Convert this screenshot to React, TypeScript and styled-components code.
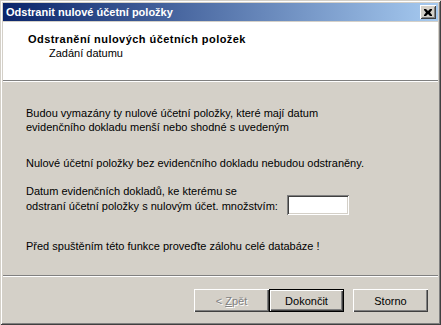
import React from "react";
import styled, { createGlobalStyle } from "styled-components";

const Global = createGlobalStyle`
  html, body { margin: 0; padding: 0; background: #d4d0c8; }
  body { font-family: Tahoma, "Liberation Sans", Arial, sans-serif; font-size: 11px; color: #000; }
`;

const Window = styled.div`
  width: 441px;
  height: 325px;
  box-sizing: border-box;
  background: #d4d0c8;
  padding: 3px;
  display: flex;
  flex-direction: column;
  box-shadow: inset 1px 1px 0 #d4d0c8, inset -1px -1px 0 #404040,
    inset 2px 2px 0 #ffffff, inset -2px -2px 0 #808080;
`;

const TitleBar = styled.div`
  height: 18px;
  flex: none;
  display: flex;
  align-items: center;
  justify-content: space-between;
  padding: 0 2px 0 3px;
  background: linear-gradient(to right, #0a246a, #a6caf0);
  color: #fff;
  font-weight: bold;
  font-size: 11px;
  font-family: Tahoma, "Liberation Sans", Arial, sans-serif;
`;

const CloseButton = styled.div`
  width: 16px;
  height: 14px;
  box-sizing: border-box;
  background: #d4d0c8;
  display: flex;
  align-items: center;
  justify-content: center;
  box-shadow: inset 1px 1px 0 #ffffff, inset -1px -1px 0 #404040,
    inset 2px 2px 0 #d4d0c8, inset -2px -2px 0 #808080;
`;

const Header = styled.div`
  flex: none;
  height: 58px;
  background: #fff;
  box-sizing: border-box;
  padding: 11px 0 0 25px;
  margin-top: 1px;
`;

const HeaderTitle = styled.div`
  font-weight: bold;
  line-height: 13px;
  letter-spacing: 0.45px;
`;

const HeaderSub = styled.div`
  line-height: 13px;
  padding-left: 21px;
  margin-top: 1px;
`;

const Etched = styled.div`
  flex: none;
  height: 2px;
  box-sizing: border-box;
  border-top: 1px solid #808080;
  border-bottom: 1px solid #ffffff;
`;

const Body = styled.div`
  flex: none;
  height: 193px;
  box-sizing: border-box;
  padding: 24px 0 0 23px;
  display: flex;
  flex-direction: column;
`;

const Para = styled.p<{ $gap: number }>`
  margin: ${(p) => p.$gap}px 0 0 0;
  line-height: 14px;
`;

const InputRow = styled.div`
  display: flex;
  align-items: flex-end;
  margin-top: 14px;
`;

const Label = styled.div`
  line-height: 15px;
  width: 261px;
`;

const TextBox = styled.div`
  width: 62px;
  height: 20px;
  box-sizing: border-box;
  background: #fff;
  margin-bottom: -1px;
  box-shadow: inset 1px 1px 0 #808080, inset -1px -1px 0 #ffffff,
    inset 2px 2px 0 #404040, inset -2px -2px 0 #d4d0c8;
`;

const ButtonRow = styled.div`
  flex: 1;
  display: flex;
  justify-content: flex-end;
  align-items: flex-start;
  padding: 12px 10px 0 0;
`;

const Button = styled.div<{ $default?: boolean; $disabled?: boolean; $ml?: number }>`
  width: 75px;
  height: 23px;
  box-sizing: border-box;
  margin-left: ${(p) => p.$ml ?? 0}px;
  display: flex;
  align-items: center;
  justify-content: center;
  background: #d4d0c8;
  color: ${(p) => (p.$disabled ? "#808080" : "#000")};
  text-shadow: ${(p) => (p.$disabled ? "1px 1px 0 #fff" : "none")};
  box-shadow: ${(p) =>
    p.$default
      ? "inset 0 0 0 1px #000, inset 2px 2px 0 #fff, inset -2px -2px 0 #404040, inset -3px -3px 0 #808080"
      : "inset 1px 1px 0 #fff, inset -1px -1px 0 #404040, inset -2px -2px 0 #808080"};
`;

export default function App() {
  return (
    <>
      <Global />
      <Window>
        <TitleBar>
          <span>Odstranit nulové účetní položky</span>
          <CloseButton>
            <svg width="8" height="7" viewBox="0 0 8 7">
              <path d="M0 0h2l2 2 2-2h2v1L6 3.5 8 6v1H6L4 5 2 7H0V6l2-2.5L0 1z" fill="#000" />
            </svg>
          </CloseButton>
        </TitleBar>
        <Header>
          <HeaderTitle>Odstranění nulových účetních položek</HeaderTitle>
          <HeaderSub>Zadání datumu</HeaderSub>
        </Header>
        <Etched />
        <Body>
          <Para $gap={0}>
            Budou vymazány ty nulové účetní položky, které mají datum
            <br />
            evidenčního dokladu menší nebo shodné s uvedeným
          </Para>
          <Para $gap={22}>Nulové účetní položky bez evidenčního dokladu nebudou odstraněny.</Para>
          <InputRow>
            <Label>
              Datum evidenčních dokladů, ke kterému se
              <br />
              odstraní účetní položky s nulovým účet. množstvím:
            </Label>
            <TextBox />
          </InputRow>
          <Para $gap={25}>Před spuštěním této funkce proveďte zálohu celé databáze !</Para>
        </Body>
        <Etched />
        <ButtonRow>
          <Button $disabled>
            &lt;&nbsp;<u>Z</u>pět
          </Button>
          <Button $default>Dokončit</Button>
          <Button $ml={9}>Storno</Button>
        </ButtonRow>
      </Window>
    </>
  );
}
